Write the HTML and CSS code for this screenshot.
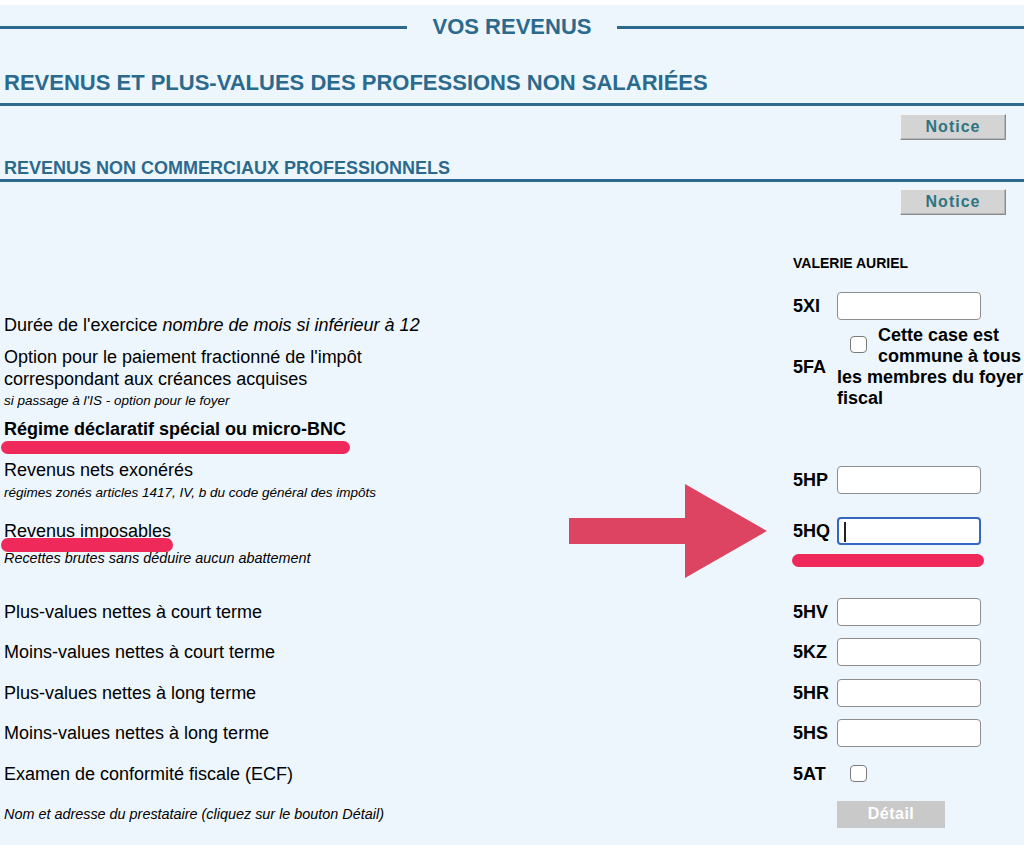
FILE: index.html
```html
<!DOCTYPE html>
<html lang="fr">
<head>
  <meta charset="UTF-8" />
  <meta name="viewport" content="width=device-width, initial-scale=1.0"/>
  <title>Vos revenus | Déclaration</title>
  <link rel="stylesheet" href="styles.css">
</head>

<body>
  <main class="page">
    <h1 class="page-title">VOS REVENUS</h1>

    <h2 class="section-title">REVENUS ET PLUS-VALUES DES PROFESSIONS NON SALARIÉES</h2>
    <div class="notice-bar"><button class="notice-btn">Notice</button></div>

    <h3 class="sub-title">REVENUS NON COMMERCIAUX PROFESSIONNELS</h3>
    <div class="notice-bar notice-bar-sub"><button class="notice-btn">Notice</button></div>

    <section class="form">
      <div class="row row-head">
        <span></span>
        <span class="person">VALERIE AURIEL</span>
      </div>

      <div class="row row-5xi">
        <div class="label">Durée de l'exercice <em>nombre de mois si inférieur à 12</em></div>
        <div class="code">5XI</div>
        <div class="field"><input type="text" class="box" /></div>
      </div>

      <div class="row row-5fa">
        <div class="label">
          Option pour le paiement fractionné de l'impôt<br>correspondant aux créances acquises
          <div class="note">si passage à l'IS - option pour le foyer</div>
        </div>
        <div class="code">5FA</div>
        <div class="field shared">
          <input type="checkbox" class="check" />Cette case est<br>commune à tous<br>les membres du foyer<br>fiscal
        </div>
      </div>

      <div class="row row-title">
        <div class="label"><strong class="marked">Régime déclaratif spécial ou micro-BNC</strong></div>
      </div>

      <div class="row row-5hp">
        <div class="label">
          Revenus nets exonérés
          <div class="note">régimes zonés articles 1417, IV, b du code général des impôts</div>
        </div>
        <div class="code">5HP</div>
        <div class="field"><input type="text" class="box" /></div>
      </div>

      <div class="row row-5hq">
        <div class="label">
          <span class="marked marked-thin">Revenus imposables</span>
          <div class="note note-wide">Recettes brutes sans déduire aucun abattement</div>
        </div>
        <div class="code">5HQ</div>
        <div class="field"><input type="text" class="box box-focus" /></div>

        <svg class="arrow" width="198" height="94" viewBox="0 0 198 94">
          <polygon points="0,34 116,34 116,0 198,47 116,94 116,60 0,60" fill="#dc4461"/>
        </svg>
        <span class="code-mark"></span>
      </div>

      <div class="row row-simple row-first">
        <div class="label">Plus-values nettes à court terme</div>
        <div class="code">5HV</div>
        <div class="field"><input type="text" class="box" /></div>
      </div>

      <div class="row row-simple">
        <div class="label">Moins-values nettes à court terme</div>
        <div class="code">5KZ</div>
        <div class="field"><input type="text" class="box" /></div>
      </div>

      <div class="row row-simple">
        <div class="label">Plus-values nettes à long terme</div>
        <div class="code">5HR</div>
        <div class="field"><input type="text" class="box" /></div>
      </div>

      <div class="row row-simple">
        <div class="label">Moins-values nettes à long terme</div>
        <div class="code">5HS</div>
        <div class="field"><input type="text" class="box" /></div>
      </div>

      <div class="row row-simple">
        <div class="label">Examen de conformité fiscale (ECF)</div>
        <div class="code">5AT</div>
        <div class="field"><input type="checkbox" class="check check-solo" /></div>
      </div>

      <div class="row row-simple">
        <div class="label note-label">Nom et adresse du prestataire (cliquez sur le bouton Détail)</div>
        <div class="code"></div>
        <div class="field"><button class="detail-btn" disabled>Détail</button></div>
      </div>
    </section>
  </main>
</body>
</html>
```

FILE: styles.css
```css
* {
  box-sizing: border-box;
}

body {
  margin: 0;
  background: #fff;
  font-family: "Liberation Sans", Arial, Helvetica, sans-serif;
  color: #000;
}

.page {
  margin-top: 5px;
  min-height: 840px;
  padding: 9px 0 20px;
  background: #eef6fd;
  overflow: hidden;
}

/* titles */
.page-title {
  margin: 0;
  display: flex;
  align-items: center;
  gap: 26px;
  font-size: 22px;
  line-height: 26px;
  font-weight: bold;
  color: #2c6a8d;
}

.page-title::before,
.page-title::after {
  content: "";
  flex: 1;
  height: 3px;
  background: #2c6a8d;
}

.section-title {
  margin: 30px 0 0;
  padding: 0 4px 7px;
  font-size: 22px;
  line-height: 26px;
  color: #2c6a8d;
  border-bottom: 3px solid #2c6a8d;
}

.sub-title {
  margin: 18px 0 0;
  padding: 0 4px;
  font-size: 18px;
  line-height: 21px;
  color: #2c6a8d;
  border-bottom: 3px solid #2c6a8d;
}

.notice-bar {
  display: flex;
  justify-content: flex-end;
  padding-right: 18px;
  margin-top: 8px;
}

.notice-bar-sub {
  margin-top: 7px;
}

.notice-btn {
  width: 106px;
  height: 26px;
  padding: 0;
  background: #d4d4d4;
  border: 1px solid;
  border-color: #f4f4f4 #8c8c8c #8c8c8c #f4f4f4;
  box-shadow: inset -1px -1px 0 #b4b4b4;
  color: #2e7480;
  font-family: "Liberation Sans", Arial, sans-serif;
  font-size: 16px;
  font-weight: bold;
  letter-spacing: 1px;
}

/* form rows */
.form {
  margin-top: 40px;
}

.row {
  position: relative;
  display: grid;
  grid-template-columns: 1fr 44px 187px;
  align-items: center;
}

.label {
  padding-left: 4px;
  font-size: 18px;
  line-height: 22px;
}

.note {
  font-size: 13.5px;
  line-height: 17px;
  font-style: italic;
}

.note-wide {
  font-size: 14.4px;
}

.code {
  font-size: 18px;
  line-height: 22px;
  font-weight: bold;
}

.person {
  grid-column: 2 / 4;
  font-size: 14px;
  line-height: 17px;
  font-weight: bold;
}

.box {
  display: block;
  width: 144px;
  height: 28px;
  margin: 0;
  background: #fff;
  border: 1px solid #8d8d8d;
  border-radius: 4px;
}

.box-focus {
  border: 2px solid #3566c4;
  background: linear-gradient(#222, #222) no-repeat 5px 3px / 2px 20px, #fff;
}

.check {
  appearance: none;
  -webkit-appearance: none;
  width: 17px;
  height: 17px;
  margin: 0;
  background: #fff;
  border: 1px solid #7a7a7a;
  border-radius: 4px;
}

.check-solo {
  display: block;
  margin-left: 13px;
}

.row-5xi {
  margin-top: 20px;
  align-items: start;
}

.row-5xi .label {
  padding-top: 22px;
}

.row-5xi .code {
  margin-top: 3px;
}

.row-5fa {
  margin-top: -11px;
  align-items: start;
}

.row-5fa .label {
  padding-top: 21px;
}

.row-5fa .note {
  margin-top: 2px;
}

.row-5fa .code {
  align-self: center;
}

.shared {
  font-size: 18px;
  line-height: 21px;
  font-weight: bold;
  white-space: nowrap;
}

.shared .check {
  float: left;
  margin: 11px 11px 0 13px;
}

.row-title {
  margin-top: 9px;
}

.row-5hp {
  margin-top: 19px;
}

.row-5hp .note {
  margin-top: 3px;
}

.row-5hq {
  margin-top: 16px;
  align-items: start;
}

.row-5hq .label {
  padding-top: 3px;
}

.row-5hq .note {
  margin-top: 8px;
}

.row-5hq .code {
  margin-top: 3px;
}

.row-simple {
  height: 40.5px;
}

.row-first {
  margin-top: 24.5px;
}

.note-label {
  font-size: 14.4px;
  font-style: italic;
}

.detail-btn {
  width: 108px;
  height: 27px;
  padding: 0;
  border: none;
  background: #c9c9c9;
  color: #fff;
  font-family: "Liberation Sans", Arial, sans-serif;
  font-size: 16px;
  font-weight: bold;
  letter-spacing: 0.5px;
}

/* annotations drawn over the form */
.marked {
  position: relative;
}

.marked::after {
  content: "";
  position: absolute;
  left: -3px;
  right: -4px;
  top: 22px;
  height: 13px;
  background: #f0295b;
  border-radius: 7px;
}

.marked-thin::after {
  top: 17px;
  height: 14px;
  right: -2px;
}

.arrow {
  position: absolute;
  left: 569px;
  top: -33px;
}

.code-mark {
  position: absolute;
  right: 40px;
  top: 37px;
  width: 192px;
  height: 13px;
  background: #f0295b;
  border-radius: 7px;
}
```
